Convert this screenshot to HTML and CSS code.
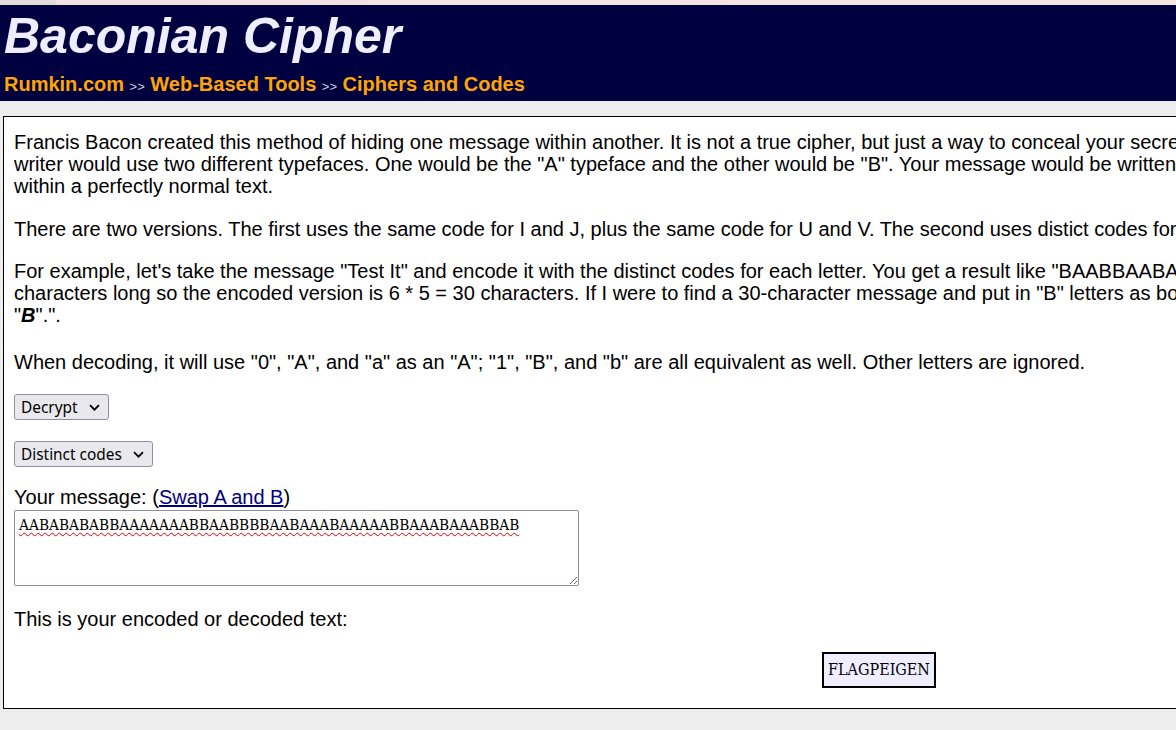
FILE: index.html
```html
<!DOCTYPE html>
<html>
<head>
<meta charset="utf-8">
<title>Baconian Cipher</title>
<link rel="stylesheet" href="styles.css">
</head>
<body>
<div class="topstrip"></div>
<header class="header">
  <h1 class="title">Baconian Cipher</h1>
  <nav class="crumbs">
    <a href="#">Rumkin.com</a> <span class="sep">&gt;&gt;</span> <a href="#">Web-Based Tools</a> <span class="sep">&gt;&gt;</span> <a href="#">Ciphers and Codes</a>
  </nav>
</header>
<main class="content">
  <p class="p1">Francis Bacon created this method of hiding one message within another. It is not a true cipher, but just a way to conceal your secret text in plain sight. The<br>writer would use two different typefaces. One would be the "A" typeface and the other would be "B". Your message would be written using those two typefaces, hiding<br>within a perfectly normal text.</p>
  <p>There are two versions. The first uses the same code for I and J, plus the same code for U and V. The second uses distict codes for each letter.</p>
  <p class="p3">For example, let's take the message "Test It" and encode it with the distinct codes for each letter. You get a result like "BAABBAABAABAABABAABBABAAABAABB". The message is six<br>characters long so the encoded version is 6 * 5 = 30 characters. If I were to find a 30-character message and put in "B" letters as bold, it might look like "This is a normal message of mine<br>"<b><i>B</i></b>".".</p>
  <p class="p4">When decoding, it will use "0", "A", and "a" as an "A"; "1", "B", and "b" are all equivalent as well. Other letters are ignored.</p>
  <div class="field f1"><select class="sel"><option>Decrypt</option><option>Encrypt</option></select></div>
  <div class="field f2"><select class="sel"><option>Distinct codes</option><option>Same codes</option></select></div>
  <div class="msg-label">Your message: (<a href="#" class="swap">Swap A and B</a>)</div>
  <textarea class="msg" spellcheck="false">AABABABABBAAAAAAABBAABBBBAABAAABAAAAABBAAABAAABBAB</textarea>
  <p class="result-label">This is your encoded or decoded text:</p>
  <div class="out-wrap"><span class="out">FLAGPEIGEN</span></div>
</main>
</body>
</html>
```
FILE: styles.css
```css
html, body {
  margin: 0;
  padding: 0;
  overflow: hidden;
}
body {
  background: #ededed;
  font-family: "Liberation Sans", Arial, sans-serif;
  width: 1176px;
  height: 730px;
}
.topstrip {
  height: 5px;
  background: linear-gradient(to right, #e4dcd8 0, #e4dcd8 55px, #f3e2e2 56px, #f6e6e0 100%);
}
.header {
  background: #000040;
  height: 96px;
  padding: 0 0 0 4px;
  box-sizing: border-box;
}
.title {
  margin: 0;
  padding-top: 3px;
  font-size: 50px;
  font-style: italic;
  font-weight: bold;
  color: #eeeeff;
  line-height: 56px;
}
.crumbs {
  margin-top: 7px;
  font-size: 20px;
  font-weight: bold;
  line-height: 26px;
}
.crumbs a {
  color: #ffa500;
  text-decoration: none;
}
.crumbs .sep {
  font-size: 13px;
  font-weight: normal;
  color: #ccccdd;
}
.content {
  margin: 15px 0 0 3px;
  width: 1752px;
  height: 593px;
  box-sizing: border-box;
  border: 1px solid #000;
  background: #fff;
  padding: 14px 10px 0 10px;
  font-size: 20px;
  line-height: 22px;
  color: #000;
}
.content p {
  margin: 0 0 20px 0;
  white-space: nowrap;
}
.content .p1 {
  margin-bottom: 21px;
}
.content .p3 {
  margin-bottom: 25px;
}
.content .p4 {
  margin-bottom: 21px;
}
.field {
  height: 26px;
}
.f1 {
  margin-bottom: 21px;
}
.f2 {
  margin-bottom: 19px;
}
.sel {
  appearance: none;
  -webkit-appearance: none;
  font-family: "Noto Sans", "Liberation Sans", sans-serif;
  font-size: 15.4px;
  color: #000;
  background-color: #e9e9ed;
  background-image: url("data:image/svg+xml;utf8,<svg xmlns='http://www.w3.org/2000/svg' width='11' height='7' viewBox='0 0 11 7'><path d='M1 1.2 L5.5 5.7 L10 1.2' fill='none' stroke='black' stroke-width='1.8'/></svg>");
  background-repeat: no-repeat;
  background-position: right 8px center;
  border: 1px solid #8f8f9d;
  border-radius: 3px;
  height: 26px;
  padding: 0 30px 0 6px;
}
.swap {
  color: #000080;
}
.msg {
  display: block;
  margin: 2px 0 22px 0;
  width: 565px;
  height: 76px;
  box-sizing: border-box;
  border: 1px solid #8f8f9d;
  border-radius: 2px;
  padding: 4px 4px;
  font-family: "DejaVu Serif", "Liberation Serif", serif;
  font-stretch: condensed;
  font-size: 15.3px;
  line-height: 20px;
  resize: both;
  text-decoration: underline wavy #e00000;
  text-decoration-thickness: 1px;
  text-underline-offset: 2px;
}
.content .result-label {
  margin-bottom: 22px;
}
.out-wrap {
  text-align: center;
}
.out {
  display: inline-block;
  background: #eeeeff;
  border: 2px solid #000;
  padding: 5px 4px;
  font-family: "DejaVu Serif", "Liberation Serif", serif;
  font-stretch: condensed;
  font-size: 16px;
  line-height: 22px;
}
```
